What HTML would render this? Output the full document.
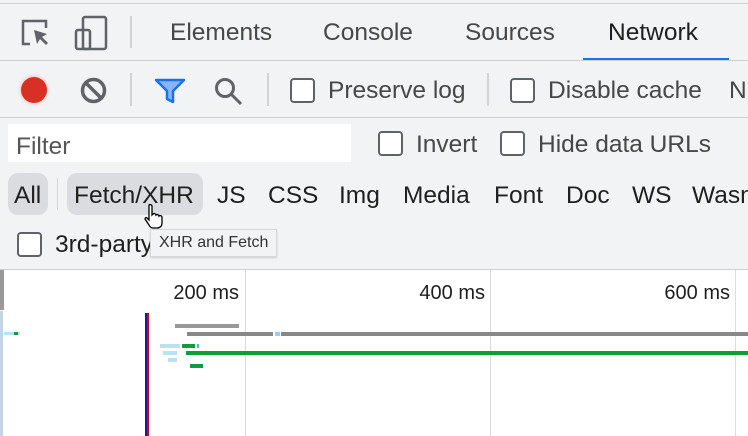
<!DOCTYPE html>
<html><head><style>
body{margin:0;width:748px;height:436px;overflow:hidden;background:#f1f3f4;font-family:"Liberation Sans",sans-serif;position:relative}
.a{position:absolute}
.t{position:absolute;font-size:24.5px;color:#474747;white-space:nowrap}
.d{color:#1f1f1f}
.cb{position:absolute;width:20px;height:20px;border:2px solid #5f6368;border-radius:4px;box-sizing:border-box;background:#fff}
.sep{position:absolute;width:2px;background:#d3d3d3}
.ms{position:absolute;font-size:20px;color:#1f1f1f;text-align:right;width:100px;top:282px}
</style></head><body>
<div class="a" style="left:0;top:3px;width:748px;height:1px;background:#d0d0d0"></div>
<svg class="a" style="left:20px;top:18px" width="32" height="32" viewBox="0 0 32 32" fill="none" stroke="#5f6368" stroke-width="2.5"><path d="M10 26H3V3h23v7"/><path d="M14 12l3 14 3-5 6 6 2-2-6-6 5-3z" fill="#5f6368" stroke="none"/></svg>
<svg class="a" style="left:74px;top:15px" width="34" height="36" viewBox="0 0 34 36" fill="none" stroke="#5f6368" stroke-width="2.5"><rect x="9" y="2" width="23" height="32" rx="2"/><rect x="2" y="15" width="14" height="19" rx="2"/></svg>
<div class="sep" style="left:130px;top:16px;height:32px"></div>
<div class="t" style="left:170px;top:19px">Elements</div>
<div class="t" style="left:323px;top:19px">Console</div>
<div class="t" style="left:465px;top:19px">Sources</div>
<div class="t d" style="left:608px;top:19px">Network</div>
<div class="a" style="left:583px;top:58px;width:146px;height:3px;background:#1a73e8"></div>
<div class="a" style="left:0;top:60px;width:748px;height:1px;background:#cfcfcf"></div>
<div class="a" style="left:21px;top:77px;width:26px;height:26px;border-radius:50%;background:#d93025;box-shadow:0 0 4px #f4b0a8"></div>
<svg class="a" style="left:80px;top:77px" width="27" height="27" viewBox="0 0 27 27" fill="none" stroke="#5f6368" stroke-width="3.5"><circle cx="13.5" cy="13.5" r="11"/><path d="M6 6l15 15"/></svg>
<div class="sep" style="left:130px;top:73px;height:33px"></div>
<svg class="a" style="left:154px;top:78px" width="32" height="26" viewBox="0 0 32 26"><path d="M2 2h28L19 13v11l-6-3v-8z" fill="#8ab4f8" stroke="#1a73e8" stroke-width="2.5" stroke-linejoin="round"/></svg>
<svg class="a" style="left:213px;top:76px" width="32" height="30" viewBox="0 0 32 30" fill="none" stroke="#5f6368" stroke-width="3"><circle cx="12" cy="12" r="8.5"/><path d="M18 18l10 10"/></svg>
<div class="sep" style="left:267px;top:73px;height:33px"></div>
<div class="cb" style="left:290px;top:78px;width:25px;height:25px"></div>
<div class="t" style="left:328px;top:77px">Preserve log</div>
<div class="sep" style="left:487px;top:73px;height:33px"></div>
<div class="cb" style="left:510px;top:78px;width:25px;height:25px"></div>
<div class="t" style="left:548px;top:77px">Disable cache</div>
<div class="t" style="left:729px;top:77px">N</div>
<div class="a" style="left:0;top:117px;width:748px;height:1px;background:#cfcfcf"></div>
<div class="a" style="left:8px;top:124px;width:343px;height:38px;background:#fff"></div>
<div class="t" style="left:16px;top:133px;color:#555">Filter</div>
<div class="cb" style="left:378px;top:131px;width:25px;height:25px"></div>
<div class="t" style="left:416px;top:131px">Invert</div>
<div class="cb" style="left:500px;top:131px;width:25px;height:25px"></div>
<div class="t" style="left:538px;top:131px">Hide data URLs</div>
<div class="a" style="left:8px;top:173px;width:40px;height:42px;border-radius:10px;background:#dadce0"></div>
<div class="t d" style="left:14px;top:182px">All</div>
<div class="sep" style="left:57px;top:178px;height:32px;width:1px"></div>
<div class="a" style="left:67px;top:173px;width:136px;height:42px;border-radius:10px;background:#dadce0"></div>
<div class="t d" style="left:74px;top:182px">Fetch/XHR</div>
<div class="t d" style="left:217px;top:182px">JS</div>
<div class="t d" style="left:268px;top:182px">CSS</div>
<div class="t d" style="left:339px;top:182px">Img</div>
<div class="t d" style="left:403px;top:182px">Media</div>
<div class="t d" style="left:494px;top:182px">Font</div>
<div class="t d" style="left:566px;top:182px">Doc</div>
<div class="t d" style="left:632px;top:182px">WS</div>
<div class="t d" style="left:692px;top:182px">Wasm</div>
<div class="cb" style="left:17px;top:232px;width:25px;height:25px"></div>
<div class="t d" style="left:55px;top:231px">3rd-party</div>
<div class="a" style="left:150px;top:229px;width:127px;height:28px;background:#f1f3f4;border:1px solid #d8d8d8;box-sizing:border-box;font-size:16px;color:#333;line-height:26px;padding-left:8px;white-space:nowrap;box-shadow:0 1px 2px rgba(0,0,0,.15)">XHR and Fetch</div>
<svg class="a" style="left:144px;top:203px" width="22" height="26" viewBox="0 0 22 26"><path d="M5 2c1-1 3 0 3 1v9l1-1c1-1 3 0 3 1 1-1 3 0 3 1 1-1 3 0 3 1v6c0 3-2 5-5 5H9c-2 0-3-1-4-3l-4-6c0-1 1-2 2-1l2 2z" fill="#fff" stroke="#000" stroke-width="1.3"/></svg>
<div class="a" style="left:0;top:269px;width:748px;height:1px;background:#cfcfcf"></div>
<div class="a" style="left:0;top:270px;width:748px;height:166px;background:#fff"></div>
<div class="a" style="left:0;top:270px;width:4px;height:40px;background:#999"></div>
<div class="a" style="left:0;top:311px;width:3px;height:125px;background:#c5d3e8"></div>
<div class="a" style="left:245px;top:270px;width:1px;height:166px;background:#ddd"></div>
<div class="a" style="left:490px;top:270px;width:1px;height:166px;background:#ddd"></div>
<div class="a" style="left:735px;top:270px;width:1px;height:166px;background:#ddd"></div>
<div class="ms" style="left:139px">200 ms</div>
<div class="ms" style="left:385px">400 ms</div>
<div class="ms" style="left:630px">600 ms</div>
<div class="a" style="left:145px;top:313px;width:2px;height:123px;background:#1a1aa0"></div>
<div class="a" style="left:147px;top:313px;width:2px;height:123px;background:#d0021b"></div>
<div class="a" style="left:175px;top:324px;width:64px;height:4px;background:#999"></div>
<div class="a" style="left:187px;top:332px;width:86px;height:4px;background:#888"></div>
<div class="a" style="left:275px;top:332px;width:5px;height:4px;background:#8fd3f0"></div>
<div class="a" style="left:281px;top:332px;width:467px;height:4px;background:#888"></div>
<div class="a" style="left:160px;top:344px;width:20px;height:4px;background:#b3e3f5"></div>
<div class="a" style="left:182px;top:344px;width:13px;height:4px;background:#0a9e3c"></div>
<div class="a" style="left:197px;top:344px;width:2px;height:4px;background:#4ab3e8"></div>
<div class="a" style="left:163px;top:351px;width:14px;height:4px;background:#b3e3f5"></div>
<div class="a" style="left:186px;top:351px;width:562px;height:4px;background:#0a9e3c"></div>
<div class="a" style="left:168px;top:358px;width:9px;height:4px;background:#b3e3f5"></div>
<div class="a" style="left:190px;top:364px;width:13px;height:4px;background:#0a9e3c"></div>
<div class="a" style="left:4px;top:332px;width:16px;height:3px;background:#b3e3f5"></div>
<div class="a" style="left:14px;top:332px;width:4px;height:3px;background:#0a9e3c"></div>
</body></html>
